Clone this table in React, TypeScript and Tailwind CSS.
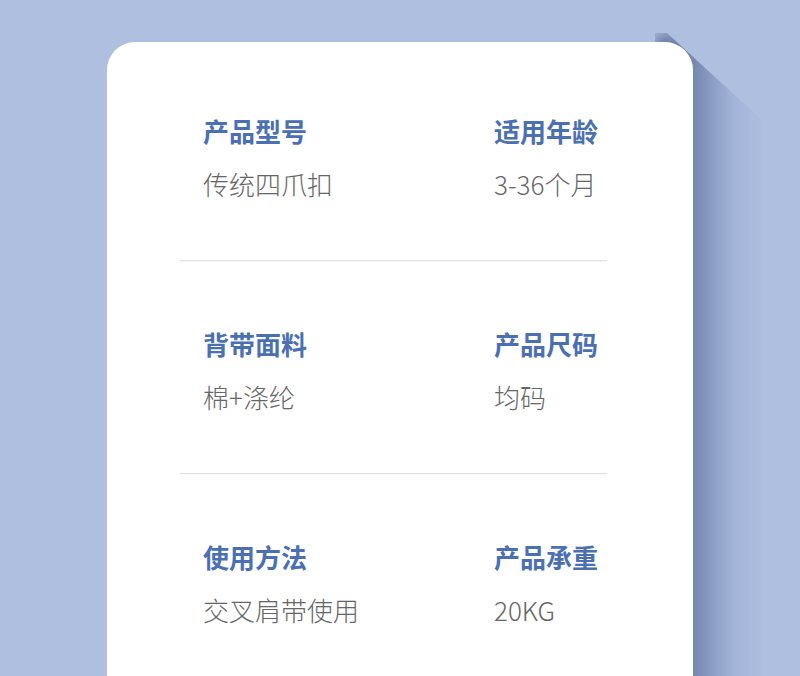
import React from "react";

const rows = [
  [
    ["产品型号", "传统四爪扣"],
    ["适用年龄", "3-36个月"],
  ],
  [
    ["背带面料", "棉+涤纶"],
    ["产品尺码", "均码"],
  ],
  [
    ["使用方法", "交叉肩带使用"],
    ["产品承重", "20KG"],
  ],
];

function Cell({ label, value }: { label: string; value: string }) {
  return (
    <div className="flex flex-col gap-[21px]">
      <div className="text-[26px] leading-[32px] font-bold text-[#4a6fb3]">{label}</div>
      <div className="text-[26px] leading-[32px] font-light text-[#666666]">{value}</div>
    </div>
  );
}

export default function App() {
  return (
    <div
      className="relative w-[800px] h-[676px] overflow-hidden bg-[#aebfe0]"
      style={{ fontFamily: '"Noto Sans CJK SC", "Noto Sans", sans-serif' }}
    >
      <div
        className="absolute left-[655px] top-[33px] w-[108px] h-[700px] blur-[6px] bg-[linear-gradient(to_right,rgba(70,88,130,0.6)_30%,rgba(120,140,185,0.25)_70%,rgba(174,191,224,0)_100%)] [clip-path:polygon(0_0,12px_0,108px_88px,108px_100%,0_100%)]"
      />
      <div className="relative ml-[107px] mt-[42px] w-[586px] h-[700px] rounded-[28px] bg-white">
        <div className="ml-[73px] w-[427px] pt-[73px]">
          {rows.map((row, i) => (
            <div key={i}>
              {i > 0 && <div className="h-px bg-[#e2e2e2] shadow-[0_1px_1px_rgba(0,0,0,0.04)]" />}
              <div className={`flex pl-[23px] ${i > 0 ? "pt-[67px]" : ""} pb-[60px]`}>
                <div className="w-[291px]">
                  <Cell label={row[0][0]} value={row[0][1]} />
                </div>
                <div>
                  <Cell label={row[1][0]} value={row[1][1]} />
                </div>
              </div>
            </div>
          ))}
        </div>
      </div>
    </div>
  );
}
